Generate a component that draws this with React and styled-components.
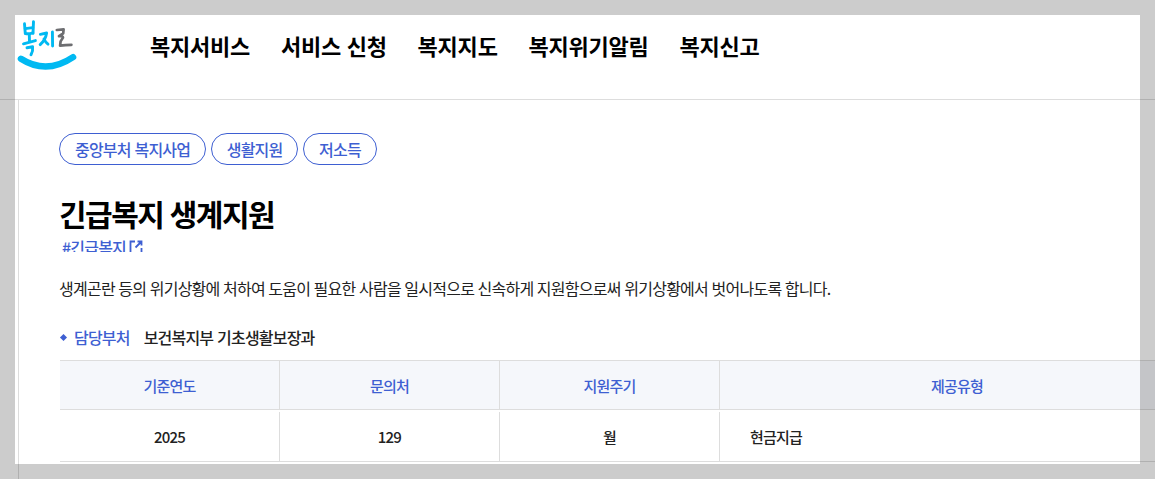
import React from 'react';
import styled, { createGlobalStyle } from 'styled-components';

const menus = ['복지서비스', '서비스 신청', '복지지도', '복지위기알림', '복지신고'];

const tags = ['중앙부처 복지사업', '생활지원', '저소득'];

const summary = [
  { label: '기준연도', value: '2025' },
  { label: '문의처', value: '129' },
  { label: '지원주기', value: '월' },
  { label: '제공유형', value: '현금지급', wide: true },
];

const BLUE = '#3e5fd2';
const LINE = '#dddddd';

const GlobalStyle = createGlobalStyle`
  * {
    box-sizing: border-box;
  }

  body {
    margin: 0;
    background: #fff;
    color: #222;
    font-family: 'Noto Sans CJK KR', 'Noto Sans', sans-serif;
    letter-spacing: -0.8px;
    overflow: hidden;
  }
`;

const Page = styled.div`
  position: relative;
  height: 479px;
  overflow: hidden;
`;

// Dimmed frame over the edges of the page
const Frame = styled.div`
  position: absolute;
  inset: 0;
  border: 15px solid rgba(0, 0, 0, 0.2);
  pointer-events: none;
`;

const Header = styled.header`
  display: flex;
  height: 100px;
  padding-left: 15px;
  border-bottom: 1px solid ${LINE};
`;

const Logo = styled.svg`
  display: block;
  flex: none;
  width: 65px;
  height: 60px;
  margin-top: 15px;
`;

const Nav = styled.nav`
  display: flex;
  gap: 30.8px;
  height: 34px;
  margin: 28px 0 0 70px;
`;

const NavItem = styled.a`
  color: #000;
  font-size: 22px;
  font-weight: 700;
  line-height: 34px;
  letter-spacing: -0.22px;
  word-spacing: 1px;
  white-space: nowrap;
`;

const Main = styled.main`
  height: 379px;
  margin-left: 18px;
  padding: 33px 0 0 40px;
  border-left: 1px solid ${LINE};
`;

const TagList = styled.div`
  display: flex;
  gap: 4.6px;
`;

const Tag = styled.span`
  height: 32px;
  padding: 0 15px;
  border: 1px solid ${BLUE};
  border-radius: 16px;
  color: ${BLUE};
  font-size: 16px;
  font-weight: 500;
  line-height: 30px;
  word-spacing: 1px;
`;

const Title = styled.h1`
  margin: 26px 0 0;
  color: #000;
  font-size: 30px;
  font-weight: 700;
  line-height: 44px;
  letter-spacing: -0.05em;
  word-spacing: 1px;
`;

const HashTag = styled.a`
  display: flex;
  gap: 2.5px;
  height: 17px;
  padding-left: 3px;
  overflow: hidden;
  color: ${BLUE};
  font-size: 16px;
  font-weight: 500;
  line-height: 24px;
`;

const LinkIcon = styled.svg`
  width: 14px;
  height: 14px;
  margin-top: 5px;
`;

const Description = styled.p`
  margin: 24px 0 0;
  font-size: 16px;
  line-height: 24px;
  letter-spacing: -0.73px;
  word-spacing: 0.5px;
`;

const Department = styled.div`
  display: flex;
  align-items: center;
  height: 24px;
  margin-top: 25px;
  font-size: 16px;
  font-weight: 500;
  word-spacing: 1px;
`;

const Bullet = styled.i`
  width: 5px;
  height: 5px;
  margin: 0 8px 0 2px;
  background: ${BLUE};
  transform: rotate(45deg);
`;

const DepartmentLabel = styled.span`
  margin-right: 14px;
  color: ${BLUE};
`;

const Table = styled.div`
  width: 1135px;
  margin: 11px 0 0 1px;
`;

const Row = styled.div`
  display: grid;
  grid-template-columns: 220px 220px 220px 1fr;
  height: 50px;
  margin-bottom: 2px;
  border-bottom: 1px solid ${LINE};
  font-size: 15px;
  font-weight: 500;
  text-align: center;
`;

const HeadRow = styled(Row)`
  border-top: 1px solid ${LINE};
  background: #f5f7fb;
  color: ${BLUE};
`;

const Cell = styled.div`
  padding-left: ${({ $wide }) => ($wide ? '30px' : '0')};
  border-right: 1px solid ${LINE};
  line-height: 50px;
  text-align: ${({ $wide }) => ($wide ? 'left' : 'center')};
`;

const HeadCell = styled(Cell)`
  height: 48px;
  padding-left: 0;
  line-height: 49px;
  text-align: center;
`;

const BokjiroLogo = () => (
  <Logo viewBox="15 15 65 60" fill="none" strokeLinecap="round" strokeLinejoin="round">
    <g stroke="#00b9f2" strokeWidth="2.9">
      <path d="M24.5 23.8 L25.3 33.6 Q29 34.2 32.8 32.8" />
      <path d="M33.5 21.6 L33 33.4" />
      <path d="M25.2 28.6 L32.8 27.6" />
      <path d="M29.3 34.5 L29.5 41.5" />
      <path d="M23.5 43.8 L35.4 40.6" />
      <path d="M27 47.8 L32.6 46.8 Q33.2 50.8 31 54.8" />
      <path d="M40.4 34.4 L46.6 33 Q45.6 39.8 40.2 44.6" />
      <path d="M44 39 Q45.6 42.4 48 44.2" />
      <path d="M52.4 32 L52.6 46" />
    </g>
    <g stroke="#6d6e71" strokeWidth="2.7">
      <path d="M56.8 30 L63.6 29.4 L63.2 33.4 L59 36.2 Q63 35.6 63 37.6 L60.6 41.4 L60.1 45.7 Q65.4 44.9 71.4 44.8" />
    </g>
    <path d="M20.9 58.8 Q46.5 75.2 73.1 57.2" stroke="#00b9f2" strokeWidth="6.4" />
  </Logo>
);

const App = () => {
  return (
    <>
      <GlobalStyle />
      <Page>
        <Header>
          <BokjiroLogo />
          <Nav>
            {menus.map((menu) => (
              <NavItem key={menu}>{menu}</NavItem>
            ))}
          </Nav>
        </Header>

        <Main>
          <TagList>
            {tags.map((tag) => (
              <Tag key={tag}>{tag}</Tag>
            ))}
          </TagList>
          <Title>긴급복지 생계지원</Title>
          <HashTag>
            #긴급복지
            <LinkIcon viewBox="0 0 14 14" fill="none" stroke={BLUE} strokeWidth="1.8">
              <path d="M6 1.5 H1.5 V13 H12.5 V8" />
              <path d="M8.5 1.5 H12.5 V5.5 M12.5 1.5 L6.5 7.5" />
            </LinkIcon>
          </HashTag>
          <Description>
            생계곤란 등의 위기상황에 처하여 도움이 필요한 사람을 일시적으로 신속하게 지원함으로써 위기상황에서 벗어나도록 합니다.
          </Description>
          <Department>
            <Bullet />
            <DepartmentLabel>담당부처</DepartmentLabel>
            <span>보건복지부 기초생활보장과</span>
          </Department>

          <Table>
            <HeadRow>
              {summary.map((item) => (
                <HeadCell key={item.label}>{item.label}</HeadCell>
              ))}
            </HeadRow>
            <Row>
              {summary.map((item) => (
                <Cell key={item.label} $wide={item.wide}>{item.value}</Cell>
              ))}
            </Row>
          </Table>
        </Main>
        <Frame />
      </Page>
    </>
  );
};

export default App;
